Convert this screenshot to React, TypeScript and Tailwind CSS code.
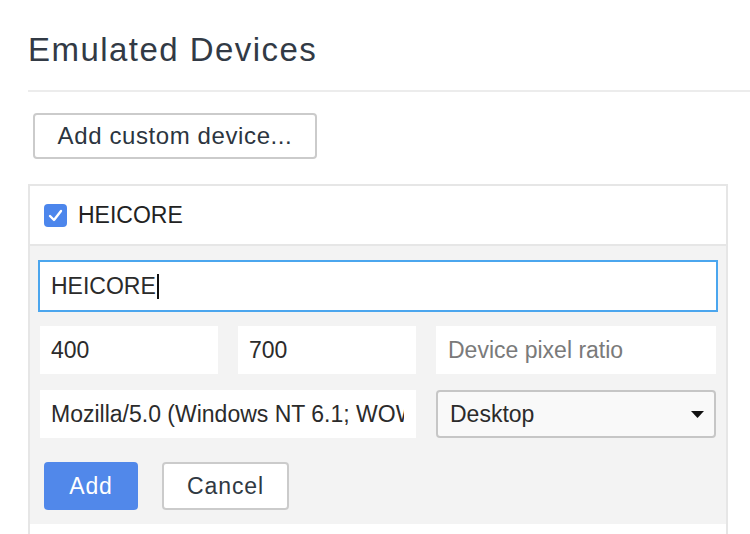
import React from "react";

export default function App() {
  return (
    <div
      className="w-[750px] h-[534px] overflow-hidden bg-white text-[#303942]"
      style={{ fontFamily: '"Liberation Sans", Arial, sans-serif' }}
    >
      <div className="ml-[28px] pt-[30px] pb-[20px] border-b-2 border-[#ececec]">
        <h1 className="text-[33px] leading-[40px] tracking-[1.45px] font-normal text-[#323a45]">
          Emulated Devices
        </h1>
      </div>

      <div className="ml-[33px] mt-[21px]">
        <button className="w-[284px] h-[46px] border-2 border-[#cbcbcb] rounded-[4px] bg-white text-[24px] tracking-[0.6px] text-[#2c3540] flex items-center justify-center">
          Add custom device...
        </button>
      </div>

      <div className="ml-[28px] mt-[25px] w-[700px] border-x-2 border-t-2 border-[#e6e6e6]">
        <div className="h-[60px] border-b-2 border-[#e6e6e6] bg-white flex items-center pl-[14px] gap-[11px]">
          <div className="w-[23px] h-[23px] rounded-[4px] bg-[#4c86ec] flex items-center justify-center">
            <svg width="15" height="13" viewBox="0 0 15 13" fill="none">
              <path
                d="M2 7 L6 11 L13 2"
                stroke="white"
                strokeWidth="2.4"
                strokeLinecap="round"
                strokeLinejoin="round"
              />
            </svg>
          </div>
          <span className="text-[23px] leading-none text-[#222222]">HEICORE</span>
        </div>

        <div className="bg-[#f3f3f3] px-[10px] pt-[16px] pb-[14px]">
          <div className="h-[48px] bg-white ring-2 ring-[#4ba6ee] flex items-center px-[11px]">
            <span className="text-[23px] leading-none text-[#2b2b2b]">HEICORE</span>
            <span className="w-[2px] h-[25px] bg-[#111] ml-[1px]" />
          </div>

          <div className="mt-[16px] flex gap-[20px]">
            <div className="w-[178px] h-[48px] bg-white flex items-center px-[11px] text-[23px] text-[#2b2b2b]">
              400
            </div>
            <div className="w-[178px] h-[48px] bg-white flex items-center px-[11px] text-[23px] text-[#2b2b2b]">
              700
            </div>
            <div className="flex-1 h-[48px] bg-white flex items-center px-[12px] text-[23px] text-[#7a7a7a]">
              Device pixel ratio
            </div>
          </div>

          <div className="mt-[16px] flex gap-[20px]">
            <div className="w-[376px] h-[48px] bg-white flex items-center pl-[11px] pr-[12px] overflow-hidden">
              <div className="w-full min-w-0 overflow-hidden whitespace-nowrap text-[23px] text-[#2b2b2b]">
                Mozilla/5.0 (Windows NT 6.1; WOW64)
              </div>
            </div>
            <div className="flex-1 h-[48px] border-2 border-[#c6c6c6] rounded-[4px] bg-[#f9f9f9] flex items-center justify-between pl-[12px] pr-[10px]">
              <span className="text-[23px] text-[#2b2b2b]">Desktop</span>
              <svg width="13" height="7" viewBox="0 0 13 7">
                <path d="M0 0 L13 0 L6.5 7 Z" fill="#111" />
              </svg>
            </div>
          </div>

          <div className="mt-[24px] ml-[4px] flex gap-[24px]">
            <button className="w-[94px] h-[48px] rounded-[4px] bg-[#5188ea] text-white text-[23px] tracking-[0.9px] flex items-center justify-center">
              Add
            </button>
            <button className="w-[127px] h-[48px] rounded-[4px] border-2 border-[#cbcbcb] bg-white text-[#303942] text-[23px] tracking-[0.9px] flex items-center justify-center">
              Cancel
            </button>
          </div>
        </div>
        <div className="h-[60px] bg-white" />
      </div>
    </div>
  );
}
